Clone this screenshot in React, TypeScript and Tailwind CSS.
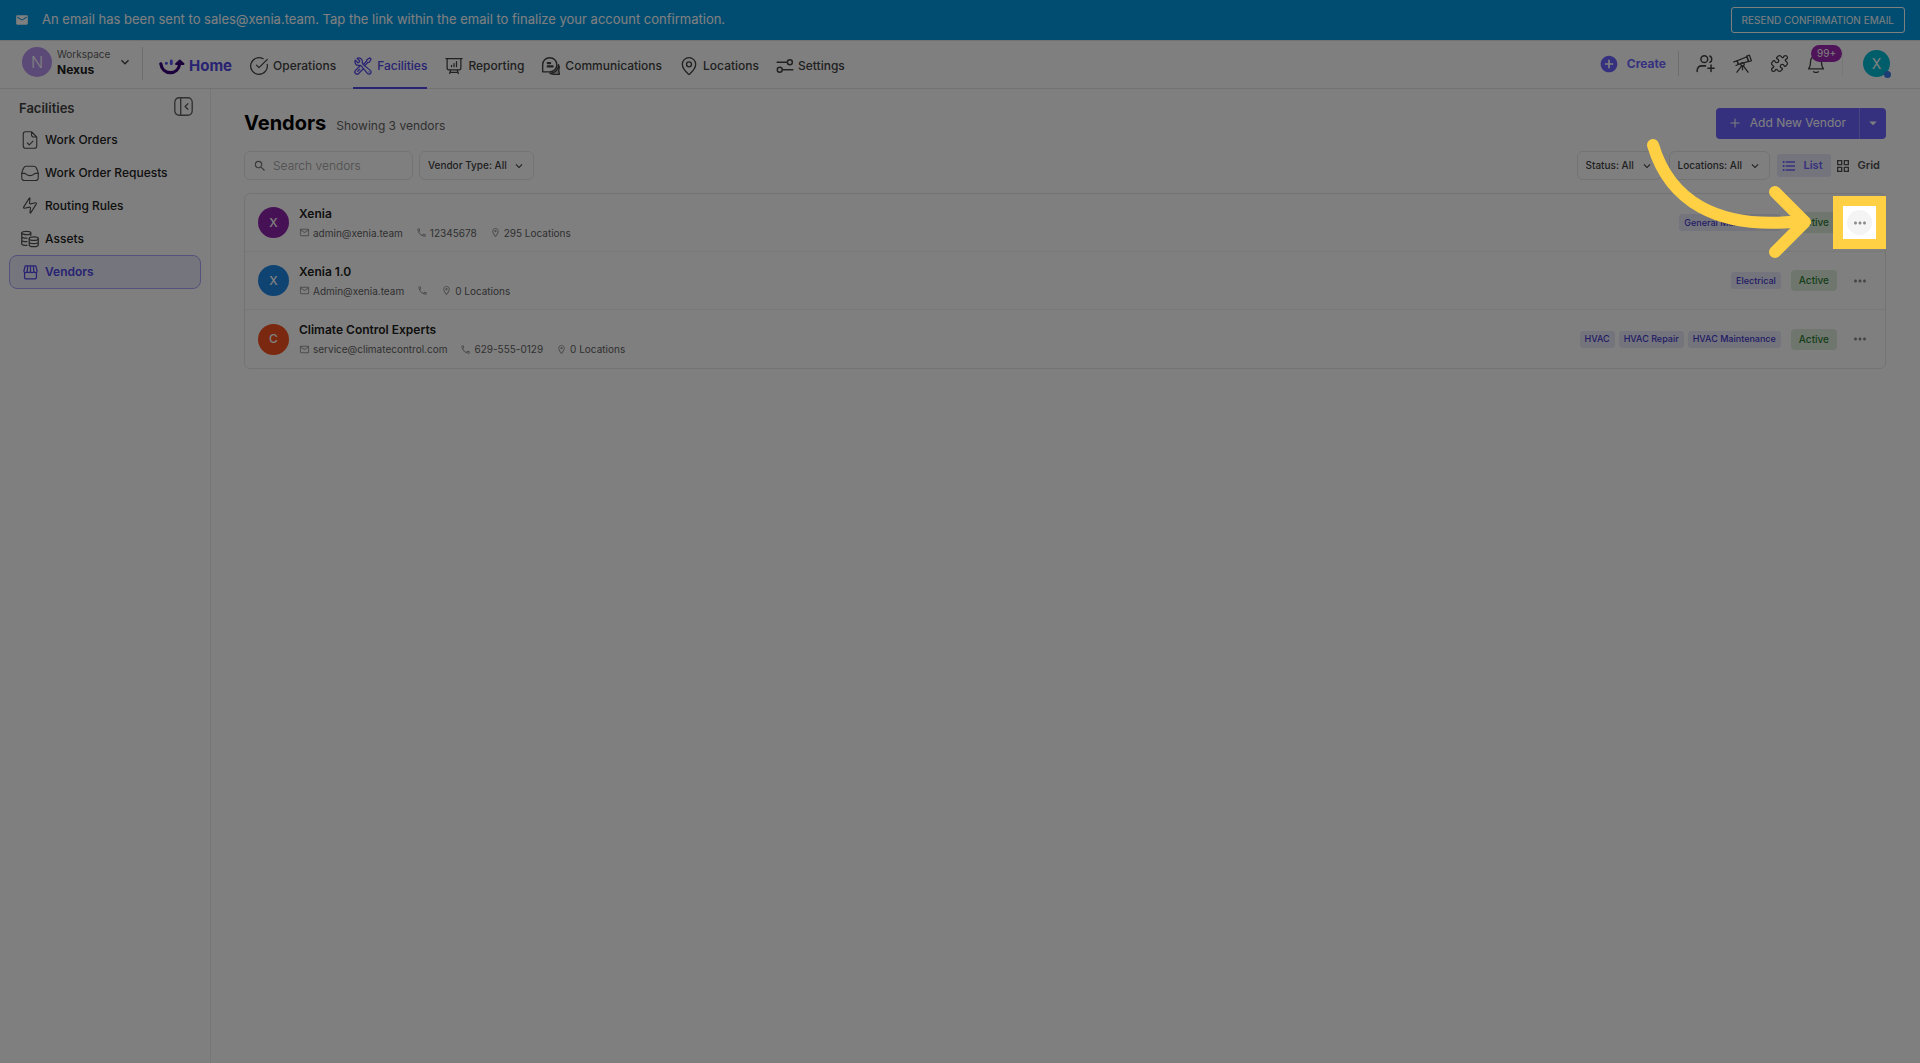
import React from "react";
import { CircleCheckBig, MapPin, Puzzle, Plus, Zap } from "lucide-react";
import { HiOutlinePresentationChartBar, HiOutlineWrenchScrewdriver } from "react-icons/hi2";
import {
  MdAddCircle,
  MdArrowDropDown,
  MdEmail,
  MdFormatListBulleted,
  MdKeyboardArrowDown,
  MdMoreHoriz,
  MdOutlineCall,
  MdOutlineEmail,
  MdOutlineGridView,
  MdOutlineLocationOn,
  MdSearch,
} from "react-icons/md";

type IconProps = { className?: string };

function Stroke({ className, children, width = 1.5 }: IconProps & { children: React.ReactNode; width?: number }) {
  return (
    <svg
      viewBox="0 0 24 24"
      fill="none"
      stroke="currentColor"
      strokeWidth={width}
      strokeLinecap="round"
      strokeLinejoin="round"
      className={className}
      aria-hidden="true"
    >
      {children}
    </svg>
  );
}

const LogoIcon = ({ className }: IconProps) => (
  <svg viewBox="0 0 26 16" fill="none" className={className} aria-hidden="true">
    <path d="M1.8 4.8C2.6 10.600 6.500 13.700 11.200 13.700C16.200 13.700 20 10.600 20.600 4.800" stroke="#380078" strokeWidth="3.2" strokeLinecap="round" />
    <path d="M20.800 1.400L24.600 5L17 5Z" fill="#380078" stroke="#380078" strokeWidth="1.800" strokeLinejoin="round" />
    <circle cx="7.400" cy="4.200" r="1.500" fill="#5b50f5" />
    <path d="M12.300 2V4.800" stroke="#5b50f5" strokeWidth="2.800" strokeLinecap="round" />
  </svg>
);

const ChatIcon = ({ className }: IconProps) => (
  <Stroke className={className} width={1.7}>
    <path d="M2 19V10.5C2 5.5 5.5 2 10.5 2S19 5.5 19 10.5 15.5 19 10.5 19Z" />
    <path d="M8 8.5h3M8 12.5h6" strokeWidth="2.6" />
    <path d="M21 10.5c1 1.500 1.300 4 .3 6.500l.7 5H15c-2 0-3.500-.5-4.500-1.500 6 .5 10.500-4 10.500-10Z" fill="currentColor" fillOpacity="0.35" />
  </Stroke>
);

const SlidersIcon = ({ className }: IconProps) => (
  <Stroke className={className} width={1.9}>
    <path d="M1.5 7H15M9 17h13.500" />
    <circle cx="18.500" cy="7" r="3.300" />
    <circle cx="5" cy="17" r="3.300" />
  </Stroke>
);

const InviteIcon = ({ className }: IconProps) => (
  <Stroke className={className} width={1.9}>
    <circle cx="10.500" cy="6.500" r="4.300" />
    <path d="M17.500 2.500a4.500 4.500 0 0 1 0 8M1.500 22v-1.500a5.500 5.500 0 0 1 5.500-5.500h5M19 14v8M15 18h8" />
  </Stroke>
);

const TelescopeIcon = ({ className }: IconProps) => (
  <Stroke className={className} width={1.6}>
    <path d="M5 8.600 17.500 3.500l2.200 5.700L7 13.200Z" />
    <path d="m17.300 2.700 3.400-1.200 2.600 7-3.400 1.200ZM1 10l4-1.400L7 13.200 3.800 14.500" />
    <circle cx="12" cy="13" r="2.200" />
    <path d="M11 15 5 23M13 15l6 8M12 15.500V20" />
  </Stroke>
);

const BellIcon = ({ className }: IconProps) => (
  <Stroke className={className} width={1.7}>
    <path d="M2 18.500h20c-2-2.200-2.700-4-2.700-9.500C19.300 4.500 16.500 2 12 2S4.700 4.500 4.700 9c0 5.500-.7 7.300-2.700 9.500Z" />
    <path d="M9 22.300c1.500 1.200 4.500 1.200 6 0" />
  </Stroke>
);

const CollapseIcon = ({ className }: IconProps) => (
  <Stroke className={className} width={1.7}>
    <rect x="1" y="1" width="22" height="22" rx="5.500" />
    <path d="M8.500 1v22M17.500 8.500 14 12l3.500 3.500" />
  </Stroke>
);

const FileCheckIcon = ({ className }: IconProps) => (
  <Stroke className={className}>
    <path d="M14 1H6a3 3 0 0 0-3 3v16a3 3 0 0 0 3 3h12a3 3 0 0 0 3-3V8Zm0 0v4a3 3 0 0 0 3 3h4" />
    <path d="m8.500 16 2.500 2.500 5-5" />
  </Stroke>
);

const InboxIcon = ({ className }: IconProps) => (
  <Stroke className={className}>
    <path d="M1 12.500v6A3.500 3.500 0 0 0 4.500 22h15a3.500 3.500 0 0 0 3.500-3.500v-6c-.6-3-1.500-5.500-2.600-7.300A4 4 0 0 0 17 3H7a4 4 0 0 0-3.400 2.200C2.500 7 1.600 9.500 1 12.500Z" />
    <path d="M1 12.500h4c1.800 0 2.200 3 7 3s5.200-3 7-3h4" />
  </Stroke>
);

const AssetsIcon = ({ className }: IconProps) => (
  <Stroke className={className} width={1.7}>
    <ellipse cx="7" cy="4" rx="6" ry="2.200" />
    <path d="M1 4v14.500c0 1.300 3 2.200 7 2M13 4v3M1 9c0 1.200 3 2 7 1.800M1 13.800c0 1.200 3 2 7 1.800" />
    <ellipse cx="17" cy="11.500" rx="6" ry="2.200" />
    <path d="M11 11.500V20c0 3 12 3 12 0v-8.500M11 16c0 2.800 12 2.800 12 0" />
  </Stroke>
);

const StoreIcon = ({ className }: IconProps) => (
  <Stroke className={className} width={2}>
    <path d="M3.500 1.500h17l2 8c0 3.500-5 3.500-5.200 0 0 3.500-5.300 3.500-5.300 0 0 3.500-5.300 3.500-5.300 0-.2 3.500-5.200 3.500-5.200 0ZM7.500 1.500l-.8 8M12 1.500v8M16.500 1.500l.8 8" />
    <path d="M2.500 12v8a2 2 0 0 0 2 2h15a2 2 0 0 0 2-2v-8" />
  </Stroke>
);

const navItems = [
  { label: "Operations", icon: <CircleCheckBig className="size-5" strokeWidth={1.5} /> },
  { label: "Facilities", icon: <HiOutlineWrenchScrewdriver className="size-5 -scale-x-100" />, active: true },
  { label: "Reporting", icon: <HiOutlinePresentationChartBar className="size-5" /> },
  { label: "Communications", icon: <ChatIcon className="size-5" /> },
  { label: "Locations", icon: <MapPin className="size-5" strokeWidth={1.6} /> },
  { label: "Settings", icon: <SlidersIcon className="size-[18px]" /> },
];

const sideItems = [
  { label: "Work Orders", icon: <FileCheckIcon className="size-[18px]" /> },
  { label: "Work Order Requests", icon: <InboxIcon className="size-[18px]" /> },
  { label: "Routing Rules", icon: <Zap className="size-[19px] -rotate-12" strokeWidth={1.5} /> },
  { label: "Assets", icon: <AssetsIcon className="size-[18px]" /> },
  { label: "Vendors", icon: <StoreIcon className="size-[15px]" />, active: true },
];

type Vendor = {
  name: string;
  initial: string;
  color: string;
  email: string;
  phone: string;
  locations: string;
  tags: string[];
  highlighted?: boolean;
};

const vendors: Vendor[] = [
  { name: "Xenia", initial: "X", color: "bg-[#8e24aa]", email: "admin@xenia.team", phone: "12345678", locations: "295 Locations", tags: ["General Maintenance"], highlighted: true },
  { name: "Xenia 1.0", initial: "X", color: "bg-[#1e88e5]", email: "Admin@xenia.team", phone: "", locations: "0 Locations", tags: ["Electrical"] },
  { name: "Climate Control Experts", initial: "C", color: "bg-[#f4511e]", email: "service@climatecontrol.com", phone: "629-555-0129", locations: "0 Locations", tags: ["HVAC", "HVAC Repair", "HVAC Maintenance"] },
];

function Banner() {
  return (
    <div className="flex h-10 items-center justify-between bg-[#039be5] px-[15px] text-white">
      <div className="flex items-center gap-[13px]">
        <MdEmail className="size-[14px]" />
        <p className="text-[13px]">
          An email has been sent to sales@xenia.team. Tap the link within the email to finalize your account confirmation.
        </p>
      </div>
      <button className="h-[26px] rounded-[3px] border border-white px-2.5 text-[10px] whitespace-nowrap">
        RESEND CONFIRMATION EMAIL
      </button>
    </div>
  );
}

function Header() {
  return (
    <header className="flex h-[49px] items-stretch justify-between border-y border-[#e4e4e4] pr-[30px] pl-[22px]">
      <div className="flex items-stretch">
        <button className="flex items-center gap-[5px] text-left" aria-label="Workspace Nexus">
          <span className="mb-1.5 flex size-[30px] items-center justify-center rounded-full bg-[#b794f0] text-base font-light text-white">N</span>
          <span className="mb-1.5 w-[55px]">
            <span className="block text-[10px] leading-[15px] text-[#616161]">Workspace</span>
            <span className="block text-xs leading-[15px] font-bold text-[#212121]">Nexus</span>
          </span>
          <MdKeyboardArrowDown className="mb-1.5 size-4 text-[#424242]" />
        </button>
        <span className="mt-1.5 mr-4 ml-[9px] h-[33px] w-px bg-[#dadada]" />
        <a href="#home" className="mt-1 flex items-center gap-1 text-[15px] font-bold text-[#5046e5]">
          <LogoIcon className="h-4 w-[26px]" />
          Home
        </a>
        <nav className="ml-[17px] flex items-stretch gap-[17px]" aria-label="Main">
          {navItems.map((item) => (
            <a
              key={item.label}
              href={"#" + item.label.toLowerCase()}
              aria-current={item.active ? "page" : undefined}
              className={
                item.active
                  ? "-mb-px flex items-center gap-1 border-b-2 border-[#5046e5] pt-1 text-xs font-medium text-[#5046e5]"
                  : "flex items-center gap-1 pt-0.5 text-xs font-medium text-[#424242]"
              }
            >
              {item.icon}
              {item.label}
            </a>
          ))}
        </nav>
      </div>

      <div className="flex items-center pb-0.5 text-[#424242]">
        <button className="flex items-center gap-2 text-xs font-bold text-[#6c63ff]">
          <MdAddCircle className="size-5" />
          Create
        </button>
        <span className="mr-[17px] ml-3 h-[25px] w-px bg-[#dadada]" />
        <div className="flex items-center gap-[18px]">
          <button aria-label="Invite users">
            <InviteIcon className="size-[19px]" />
          </button>
          <button aria-label="Explore">
            <TelescopeIcon className="size-[19px]" />
          </button>
          <button aria-label="Integrations">
            <Puzzle className="size-[19px]" strokeWidth={1.6} />
          </button>
          <button aria-label="Notifications" className="relative">
            <BellIcon className="size-[18px]" />
            <span className="absolute -top-2.5 left-1 flex h-[17px] items-center rounded-full bg-[#9c27b0] px-1.5 text-[10px] text-white">99+</span>
          </button>
        </div>
        <span className="ml-[17px] h-[25px] w-px bg-[#f0f0f0]" />
        <button className="relative ml-5 flex size-[27px] items-center justify-center rounded-full bg-[#00bcd4] text-sm text-white" aria-label="Account">
          X
          <span className="absolute -right-px -bottom-px size-[7px] rounded-full bg-[#3b7de8]" />
        </button>
      </div>
    </header>
  );
}

function Sidebar() {
  return (
    <aside className="w-[211px] shrink-0 border-r border-[#ececec] px-[9px] pt-2">
      <div className="flex h-[22px] justify-between pr-2 pl-2.5">
        <h2 className="mt-0.5 text-[13px] font-semibold text-[#424242]">Facilities</h2>
        <button aria-label="Collapse sidebar" className="size-[19px] text-[#616161]">
          <CollapseIcon className="size-[19px]" />
        </button>
      </div>
      <nav className="mt-1 flex flex-col" aria-label="Facilities">
        {sideItems.map((item) => (
          <a
            key={item.label}
            href={"#" + item.label.toLowerCase().replace(/ /g, "-")}
            aria-current={item.active ? "page" : undefined}
            className={
              item.active
                ? "flex h-[34px] items-center gap-1.5 rounded-lg border border-[#a9a4f5] bg-[#ebeafa] px-[11px] text-xs font-semibold text-[#5046e5]"
                : "flex h-[33px] items-center gap-1.5 rounded-lg border border-transparent px-[11px] text-xs font-medium text-[#212121]"
            }
          >
            <span className={item.active ? "flex w-[18px] justify-center" : "flex w-[18px] justify-center text-[#505050]"}>{item.icon}</span>
            {item.label}
          </a>
        ))}
      </nav>
    </aside>
  );
}

function Filter({ label, value }: { label: string; value: string }) {
  return (
    <div className="relative flex items-center text-[#424242]">
      <select
        aria-label={label}
        className="h-[29px] appearance-none rounded-md border border-[#e6e6e6] bg-transparent pr-[26px] pl-2 text-[10px] font-medium"
      >
        <option>{value}</option>
      </select>
      <MdKeyboardArrowDown className="pointer-events-none absolute right-2 size-[14px]" />
    </div>
  );
}

function Spotlight() {
  return (
    <>
      <span className="pointer-events-none absolute -inset-1 z-40 shadow-[0_0_0_9999px_rgba(0,0,0,0.5)]" />
      <span className="pointer-events-none absolute -inset-[14px] z-50 border-[10px] border-[#ffd043]" />
      <svg
        viewBox="0 0 172 128"
        fill="none"
        stroke="#ffd043"
        strokeWidth="12"
        strokeLinecap="round"
        strokeLinejoin="round"
        className="pointer-events-none absolute -top-[75px] right-[57px] z-50 h-32 w-[172px] max-w-none"
        aria-hidden="true"
      >
        <path d="M10 10C26 64 72 96 158 86" />
        <path d="M132 57L162 87L132 117" />
      </svg>
    </>
  );
}

function VendorRow({ vendor }: { vendor: Vendor }) {
  return (
    <li className="flex h-[58px] items-center justify-between px-[13px]">
      <div className="flex items-center gap-2.5">
        <span className={"flex size-[31px] items-center justify-center rounded-full text-xs font-medium text-white " + vendor.color}>
          {vendor.initial}
        </span>
        <div>
          <h3 className="text-xs leading-5 font-semibold text-[#212121]">{vendor.name}</h3>
          <div className="flex items-center gap-[13px] text-[10px] leading-[18px] text-[#616161]">
            <span className="flex items-center gap-[3px]">
              <MdOutlineEmail className="size-[11px] text-[#9a9a9a]" />
              {vendor.email}
            </span>
            <span className="flex items-center gap-[3px]">
              <MdOutlineCall className="size-[11px] text-[#9a9a9a]" />
              {vendor.phone}
            </span>
            <span className="flex items-center gap-[3px]">
              <MdOutlineLocationOn className="size-[11px] text-[#9a9a9a]" />
              {vendor.locations}
            </span>
          </div>
        </div>
      </div>
      <div className="flex items-center">
        <ul className="flex gap-1">
          {vendor.tags.map((tag) => (
            <li key={tag} className="flex h-[17px] items-center rounded-[3px] bg-[#e9e8f9] px-[5px] text-[9px] font-medium text-[#4338ca]">
              {tag}
            </li>
          ))}
        </ul>
        <span className="ml-2.5 flex h-[21px] items-center rounded bg-[#dcecdc] px-2 text-[10px] font-medium text-[#2e7d32]">Active</span>
        <div className="relative ml-[10px] flex">
          <button
            aria-label={"Actions for " + vendor.name}
            className={
              vendor.highlighted
                ? "flex size-[25px] items-center justify-center rounded-full bg-[#f4f4f4] text-[#8a8a8a]"
                : "flex size-[25px] items-center justify-center rounded-full text-[#8a8a8a]"
            }
          >
            <MdMoreHoriz className="size-[18px]" />
          </button>
          {vendor.highlighted && <Spotlight />}
        </div>
      </div>
    </li>
  );
}

function VendorsPage() {
  return (
    <main className="min-w-0 flex-1 pt-[18px] pr-[34px] pl-[33px]">
      <div className="flex h-8 items-center justify-between">
        <div className="flex items-baseline gap-2.5">
          <h1 className="text-xl font-bold text-black">Vendors</h1>
          <p className="text-xs text-[#616161]">Showing 3 vendors</p>
        </div>
        <div className="flex h-[31px] rounded bg-[#6c63ff] text-xs text-white">
          <button className="flex items-center gap-2 pr-[13px] pl-3">
            <Plus className="size-[14px]" strokeWidth={1.8} />
            Add New Vendor
          </button>
          <button aria-label="More add options" className="flex w-[27px] items-center justify-center border-l border-[#8f88ff]">
            <MdArrowDropDown className="size-[18px]" />
          </button>
        </div>
      </div>

      <div className="mt-3 flex items-center justify-between">
        <div className="flex gap-1.5">
          <label className="flex h-[29px] w-[169px] items-center gap-1.5 rounded-md border border-[#e6e6e6] px-2 text-[#757575]">
            <MdSearch className="size-[14px] shrink-0" />
            <input
              type="text"
              aria-label="Search vendors"
              placeholder="Search vendors"
              className="w-full min-w-0 bg-transparent text-xs font-light outline-none placeholder:text-[#9a9a9a]"
            />
          </label>
          <Filter label="Vendor Type" value="Vendor Type: All" />
        </div>
        <div className="flex items-center gap-[7px]">
          <Filter label="Status" value="Status: All" />
          <Filter label="Locations" value="Locations: All" />
          <div className="flex items-center text-[11px] font-semibold">
            <button aria-pressed="true" className="flex h-[23px] items-center gap-[7px] rounded-[3px] bg-[#e9e8f9] pr-2 pl-1 text-[#6c63ff]">
              <MdFormatListBulleted className="size-4" />
              List
            </button>
            <button aria-pressed="false" className="flex h-[23px] items-center gap-[7px] pr-1.5 pl-1 text-[#505050]">
              <MdOutlineGridView className="size-4" />
              Grid
            </button>
          </div>
        </div>
      </div>

      <ul className="mt-[13px] divide-y divide-[#f0f0f0] rounded-md border border-[#e6e6e6]">
        {vendors.map((vendor) => (
          <VendorRow key={vendor.name} vendor={vendor} />
        ))}
      </ul>
    </main>
  );
}

export default function App() {
  return (
    <div className="relative flex min-h-screen flex-col overflow-hidden bg-white font-['Inter',sans-serif]">
      <Banner />
      <Header />
      <div className="flex flex-1">
        <Sidebar />
        <VendorsPage />
      </div>
    </div>
  );
}
